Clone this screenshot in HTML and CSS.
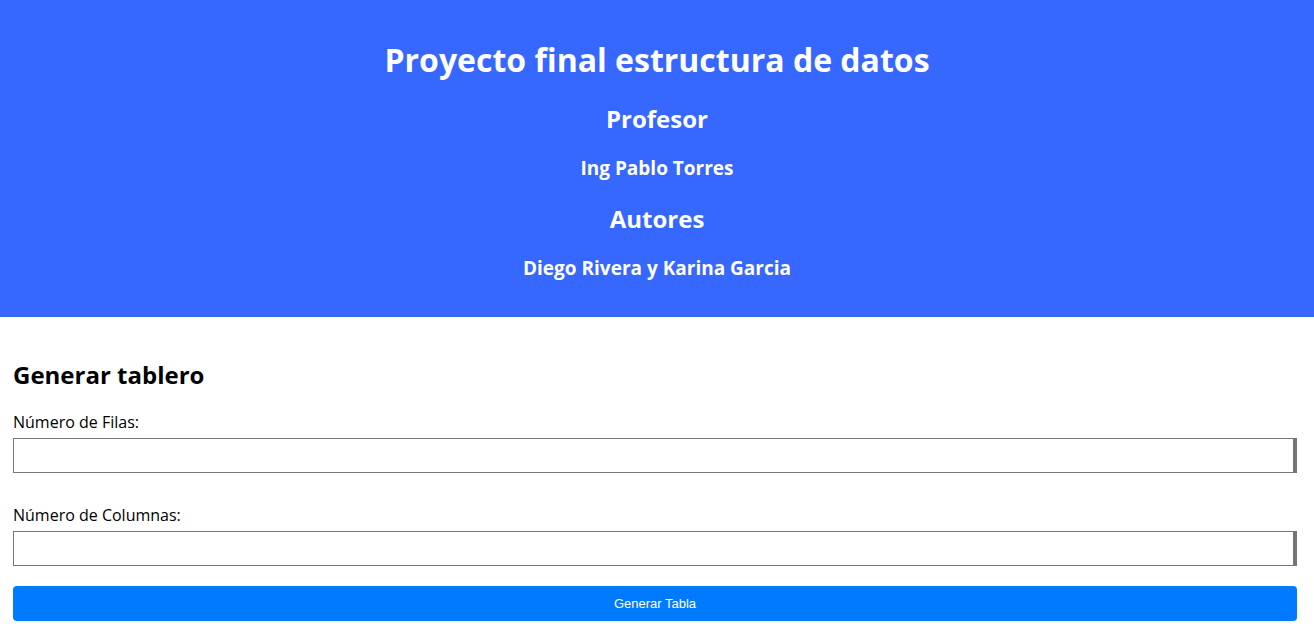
FILE: index.html
```html
<!DOCTYPE html>
<html lang="es">
<head>
<meta charset="utf-8">
<title>Proyecto final estructura de datos</title>
<link rel="stylesheet" href="styles.css">
</head>
<body>
<header class="hero">
  <h1 class="hero-title">Proyecto final estructura de datos</h1>
  <h2 class="hero-sub">Profesor</h2>
  <h3 class="hero-name">Ing Pablo Torres</h3>
  <h2 class="hero-sub">Autores</h2>
  <h3 class="hero-name">Diego Rivera y Karina Garcia</h3>
</header>
<main class="board">
  <h2 class="board-title">Generar tablero</h2>
  <form class="board-form">
    <label class="field-label" for="filas">Número de Filas:</label>
    <input class="field-input" id="filas" type="number">
    <label class="field-label field-label-2" for="columnas">Número de Columnas:</label>
    <input class="field-input" id="columnas" type="number">
    <button class="btn" type="button">Generar Tabla</button>
  </form>
</main>
</body>
</html>
```
FILE: styles.css
```css
* { box-sizing: border-box; }
body {
  margin: 0;
  font-family: "Open Sans", sans-serif;
  background: #fff;
  color: #000;
}
.hero {
  background: #3667ff;
  color: #fff;
  text-align: center;
  padding: 20px 0 37px;
  display: flex;
  flex-direction: column;
}
.hero h1, .hero h2, .hero h3 { margin: 0; }
.hero-title {
  font-size: 32px;
  line-height: 40px;
  margin-top: 20px !important;
  font-weight: 700;
}
.hero-sub {
  font-size: 24px;
  line-height: 30px;
  margin-top: 24px !important;
  font-weight: 700;
}
.hero-name {
  font-size: 19px;
  line-height: 24px;
  margin-top: 22px !important;
  font-weight: 700;
}
.board {
  padding: 0 17px 0 13px;
}
.board-title {
  font-size: 24px;
  line-height: 30px;
  margin: 43px 0 0;
  font-weight: 700;
}
.board-form {
  display: flex;
  flex-direction: column;
}
.field-label {
  font-size: 16px;
  line-height: 20px;
  margin-top: 22px;
}
.field-label-2 { margin-top: 32px; }
.field-input {
  margin-top: 6px;
  height: 35px;
  width: 100%;
  border: 1px solid #767676;
  border-right-width: 4px;
  font-size: 16px;
  padding: 4px 8px;
}
.btn {
  margin-top: 20px;
  height: 35px;
  width: 100%;
  border: none;
  border-radius: 4px;
  background: #007bff;
  color: #fff;
  font-family: "Liberation Sans", Arial, sans-serif;
  font-size: 13px;
}
```
